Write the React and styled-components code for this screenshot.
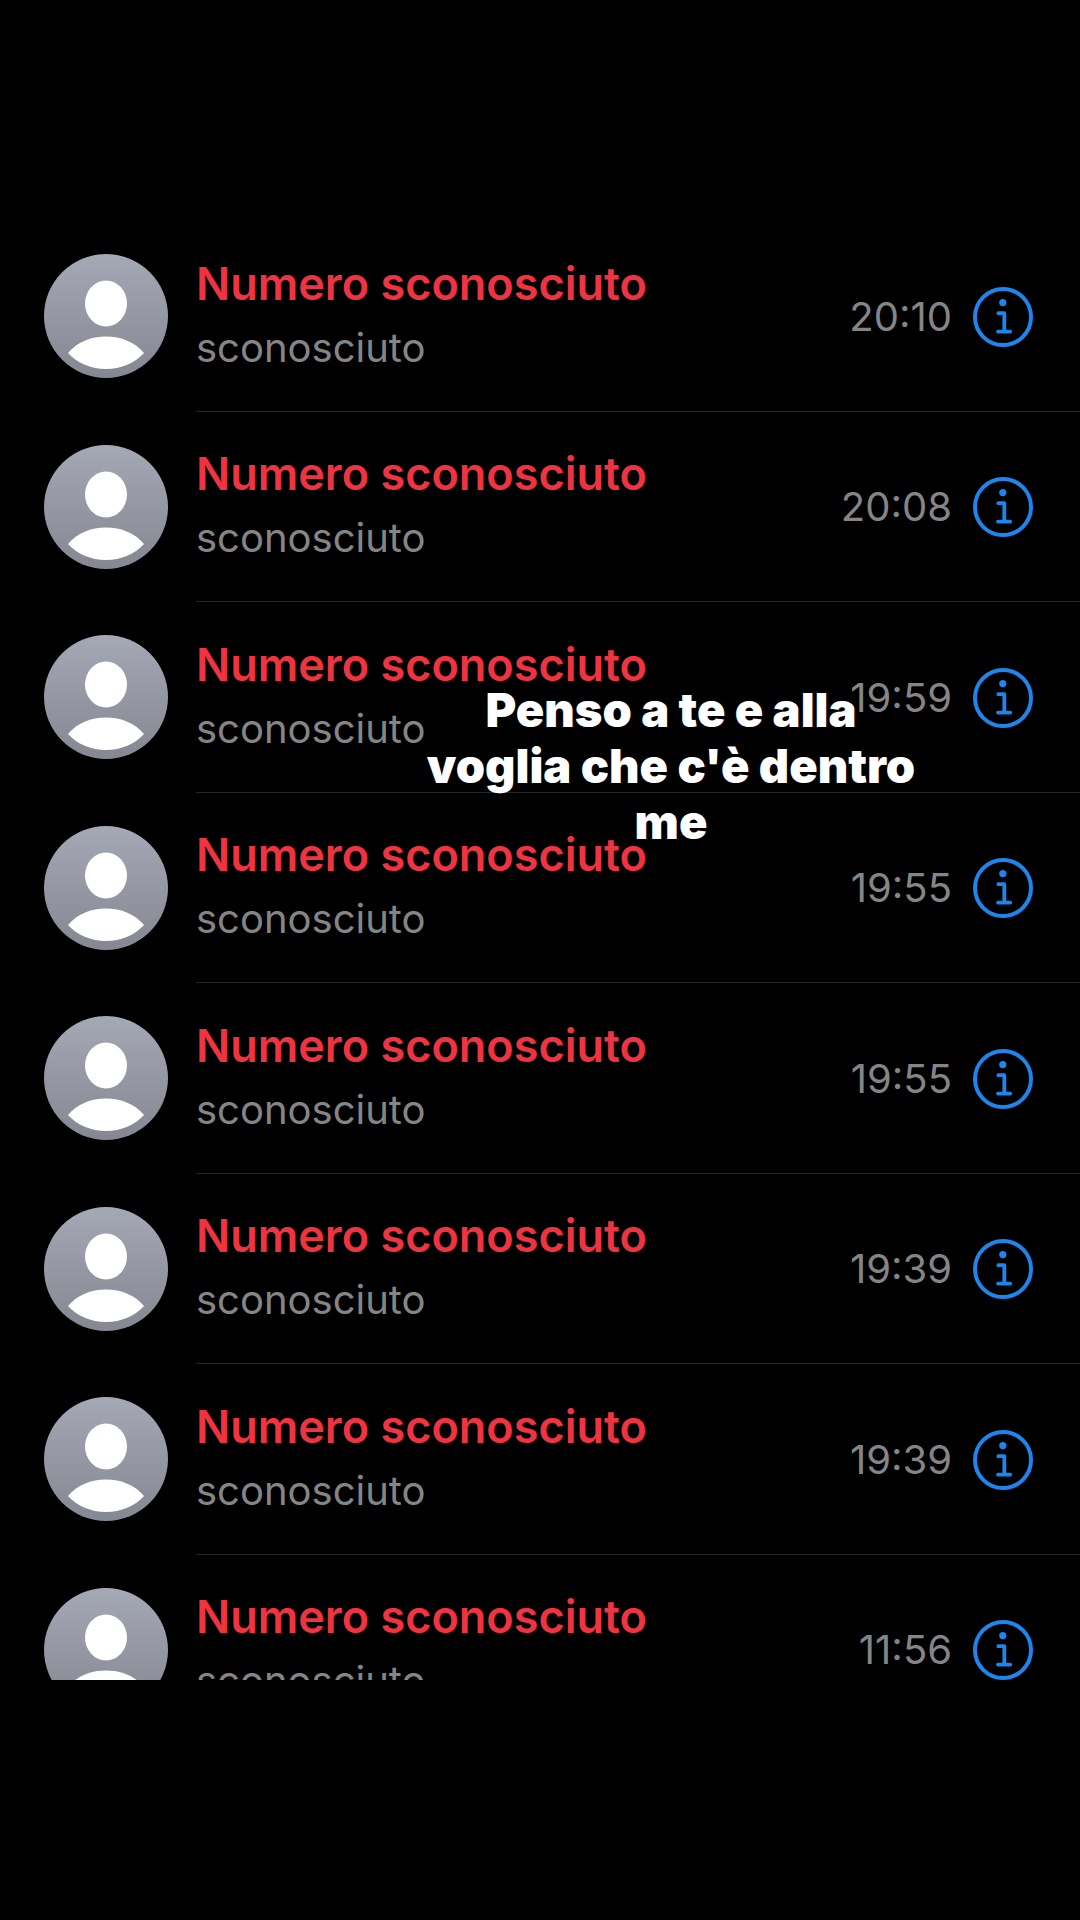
import React from 'react'
import styled, { createGlobalStyle } from 'styled-components'


function createCall(id, time){
  return{id, name: 'Numero sconosciuto', label: 'sconosciuto', time};
}

const calls = [
  createCall(1, '20:10'),
  createCall(2, '20:08'),
  createCall(3, '19:59'),
  createCall(4, '19:55'),
  createCall(5, '19:55'),
  createCall(6, '19:39'),
  createCall(7, '19:39'),
  createCall(8, '11:56'),
];

const Avatar = () => (
  <AvatarIcon viewBox="0 0 124 124" aria-hidden="true">
    <defs>
      <linearGradient id="avatar-fill" x1="0" y1="0" x2="0" y2="1">
        <stop offset="0" stopColor="#a5a8b5" />
        <stop offset="1" stopColor="#858892" />
      </linearGradient>
    </defs>
    <circle cx="62" cy="62" r="62" fill="url(#avatar-fill)" />
    <ellipse cx="62" cy="49.500" rx="21" ry="23" fill="#fff" />
    <path d="M24 99C33 88 47 82.500 62 82.500s29 5.500 38 16.500c-9 10-23 16-38 16S33 109 24 99z" fill="#fff" />
  </AvatarIcon>
)

const InfoIcon = () => (
  <svg viewBox="0 0 60 60" width="60" height="60" fill="none" stroke="currentColor" aria-hidden="true">
    <circle cx="30" cy="30" r="28" strokeWidth="4" />
    <circle cx="29.8" cy="15.6" r="3.6" fill="currentColor" stroke="none" />
    <path d="M25.3 26.200H31.300V44.600M25 44.600H37.200" strokeWidth="3.8" strokeLinecap="round" strokeLinejoin="round" />
  </svg>
)

const App = () => {
  return (
    <Screen>
      <GlobalStyle />
      <CallList>
        {calls.map((call) => (
          <CallRow key={call.id}>
            <Avatar />
            <CallBody>
              <Caller>
                <CallerName>{call.name}</CallerName>
                <CallerLabel>{call.label}</CallerLabel>
              </Caller>
              <CallTime>{call.time}</CallTime>
              <InfoButton type="button" aria-label={`Info ${call.name} ${call.time}`}>
                <InfoIcon />
              </InfoButton>
            </CallBody>
          </CallRow>
        ))}
      </CallList>
      <Caption>Penso a te e alla voglia che c'è dentro me</Caption>
    </Screen>
  )
}

const GlobalStyle = createGlobalStyle`
  * {
    box-sizing: border-box;
  }
  body {
    margin: 0;
    background: #000;
    font-family: Inter, 'Liberation Sans', sans-serif;
  }
`;

const Screen = styled.main`
  position: relative;
  display: flex;
  flex-direction: column;
  height: 100vh;
  padding: 221px 0 240px;
  background: #000;
`;

/* the last row is cut off by the bottom of the list */
const CallList = styled.ul`
  flex: 1;
  min-height: 0;
  margin: 0;
  padding: 0;
  list-style: none;
  overflow: hidden;
`;

const CallRow = styled.li`
  display: flex;
  align-items: center;
  gap: 28px;
  height: 191px;
  padding-left: 44px;

  &:nth-child(even) {
    height: 190px;
  }
`;

const AvatarIcon = styled.svg`
  flex: none;
  width: 124px;
  height: 124px;
  margin-bottom: 1px;
`;

const CallBody = styled.div`
  flex: 1;
  align-self: stretch;
  display: flex;
  align-items: center;
  padding: 1px 47px 0 0;
  border-bottom: 1px solid #262626;
`;

const Caller = styled.div`
  flex: 1;
  display: flex;
  flex-direction: column;
  gap: 8px;
  padding-bottom: 2px;
`;

const CallerName = styled.span`
  font-size: 45px;
  font-weight: 600;
  line-height: 56px;
  color: #ee3440;
`;

const CallerLabel = styled.span`
  font-size: 40px;
  line-height: 56px;
  color: #858585;
`;

const CallTime = styled.time`
  font-size: 40px;
  line-height: 56px;
  color: #858585;
`;

const InfoButton = styled.button`
  display: flex;
  margin-left: 21px;
  padding: 0;
  border: 0;
  background: none;
  color: #1d85ec;
  cursor: pointer;
`;

const Caption = styled.p`
  position: absolute;
  top: 682px;
  left: 421px;
  width: 500px;
  margin: 0;
  font-size: 47px;
  font-weight: 900;
  line-height: 56px;
  text-align: center;
  color: #fff;
`;

export default App
